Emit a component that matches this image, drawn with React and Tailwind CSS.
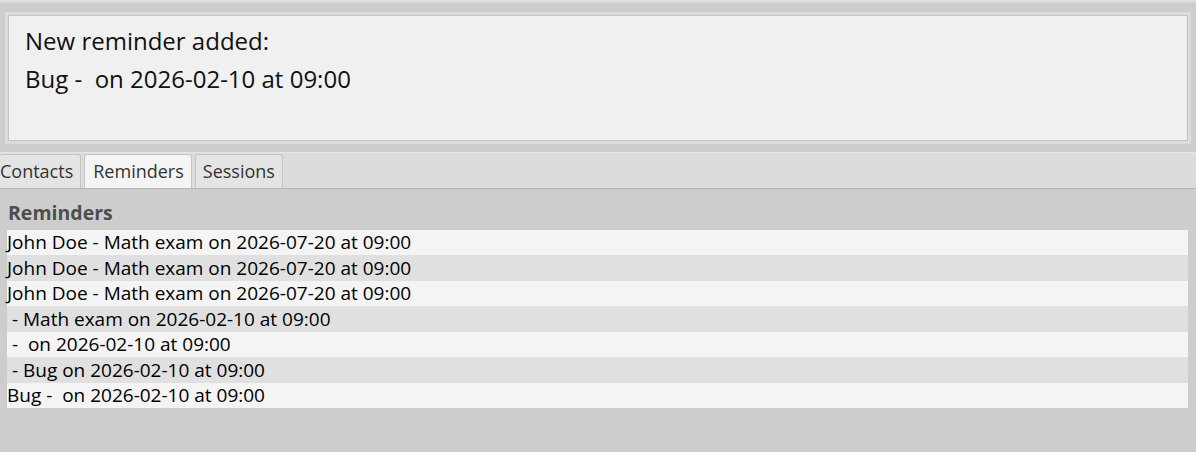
export default function App() {
  const rows = [
    "John Doe - Math exam on 2026-07-20 at 09:00",
    "John Doe - Math exam on 2026-07-20 at 09:00",
    "John Doe - Math exam on 2026-07-20 at 09:00",
    " - Math exam on 2026-02-10 at 09:00",
    " -  on 2026-02-10 at 09:00",
    " - Bug on 2026-02-10 at 09:00",
    "Bug -  on 2026-02-10 at 09:00",
  ];
  const font = { fontFamily: '"Segoe UI", "Open Sans", "Noto Sans", sans-serif' };
  return (
    <div className="w-[1196px] h-[452px] bg-[#cdcdcd] flex flex-col overflow-hidden" style={font}>
      <div className="h-[3px] bg-[#dedede] border-b border-[#d4d4d4]" />
      <div className="pt-[9px] px-[5px] pb-[8px]">
        <div className="h-[132px] border-[3px] border-[#dcdcdc] ">
          <div className="h-full border border-[#c4c4c4] bg-[#f0f0f0] px-[16px] pt-[6px] text-[24px] leading-[38px] text-[#111]">
            <div>New reminder added:</div>
            <div className="whitespace-pre">Bug -  on 2026-02-10 at 09:00</div>
          </div>
        </div>
      </div>
      <div className="h-[37px] bg-[#dcdcdc] border-t border-[#e6e6e6] border-b border-b-[#b4b4b4] flex items-end gap-[3px] pt-[2px]">
        {["Contacts", "Reminders", "Sessions"].map((t) => (
          <div
            key={t}
            className={
              "h-[34px] flex items-center border border-b-0 border-[#c4c4c4] rounded-t-[3px] text-[18px] text-[#333] " +
              (t === "Reminders"
                ? "bg-[#f4f4f4] pl-[8px] pr-[7px]"
                : t === "Sessions"
                ? "bg-[#e4e4e4] pl-[7px] pr-[7px]"
                : "bg-[#e4e4e4] pl-0 pr-[7px] border-l-0")
            }
          >
            {t}
          </div>
        ))}
      </div>
      <div className="px-[7px] pt-[12px]">
        <div className="text-[19.5px] font-bold text-[#4d4d4d] leading-[24px] pl-[1px]">Reminders</div>
        <div className="mt-[5px] w-[1181px]">
          {rows.map((r, i) => (
            <div
              key={i}
              className={
                "h-[25.43px] flex items-center whitespace-pre text-[19px] text-black " +
                (i % 2 === 0 ? "bg-[#f4f4f4]" : "bg-[#e0e0e0]")
              }
            >
              {r}
            </div>
          ))}
        </div>
      </div>
    </div>
  );
}
